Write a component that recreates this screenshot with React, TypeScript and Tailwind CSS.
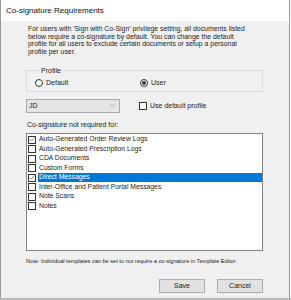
import { ChevronDown } from "lucide-react";

const items = [
  { label: "Auto-Generated Order Review Logs", checked: true },
  { label: "Auto-Generated Prescription Logs", checked: false },
  { label: "CDA Documents", checked: false },
  { label: "Custom Forms", checked: false },
  { label: "Direct Messages", checked: true, selected: true },
  { label: "Inter-Office and Patient Portal Messages", checked: false },
  { label: "Note Scans", checked: false },
  { label: "Notes", checked: false },
];

const Check = ({ checked }: { checked: boolean }) => (
  <div className="w-[8px] h-[8px] border border-[#333] bg-white flex items-center justify-center shrink-0">
    {checked && (
      <svg width="7" height="7" viewBox="0 0 7 7">
        <path d="M0.8 3.4 L2.7 5.4 L6.3 1.2" fill="none" stroke="#555" strokeWidth="0.8" />
      </svg>
    )}
  </div>
);

const Radio = ({ on }: { on: boolean }) => (
  <div className="w-[8px] h-[8px] rounded-full border border-[#333] bg-white flex items-center justify-center">
    {on && <div className="w-[4px] h-[4px] rounded-full bg-[#333]" />}
  </div>
);

export default function App() {
  return (
    <div
      className="w-[291px] h-[300px] bg-white flex flex-col text-[#000]"
      style={{ fontFamily: '"Liberation Sans", Arial, sans-serif' }}
    >
      <div className="w-[290px] h-[298px] border-l border-r border-[#9a9a9a] flex flex-col">
        <div className="h-[21px] bg-white flex items-center pl-[5px] text-[8px] text-[#111]">
          Co-signature Requirements
        </div>
        <div className="flex-1 bg-[#f0f0f0] pl-[25px] pr-[26px] flex flex-col">
          <p className="mt-[4px] pl-[2px] text-[6.9px] leading-[7.7px] text-[#222]">
            <span className="block">For users with 'Sign with Co-Sign' privilege setting, all documents listed</span>
            <span className="block">below require a co-signature by default. You can change the default</span>
            <span className="block">profile for all users to exclude certain documents or setup a personal</span>
            <span className="block">profile per user.</span>
          </p>

          <fieldset className="mt-[11px] h-[25px] border border-[#dcdcdc] px-[8px]">
            <legend className="ml-[5px] px-[1px] text-[7px] leading-[7px] text-[#222]">Profile</legend>
            <div className="flex items-center mt-[4px] text-[7px] text-[#222]">
              <div className="flex items-center gap-[3px] w-[105px]">
                <Radio on={false} />
                <span>Default</span>
              </div>
              <div className="flex items-center gap-[3px]">
                <Radio on={true} />
                <span>User</span>
              </div>
            </div>
          </fieldset>

          <div className="mt-[7px] flex items-center">
            <div className="w-[94px] h-[14px] bg-[#e5e5e5] border border-[#acacac] flex items-center justify-between pl-[2px] pr-[3px] text-[7px] text-[#222]">
              <span>JD</span>
              <ChevronDown size={7} strokeWidth={1.5} color="#555" />
            </div>
            <div className="ml-[19px] flex items-center gap-[3px] text-[7px] text-[#222]">
              <Check checked={false} />
              <span>Use default profile</span>
            </div>
          </div>

          <div className="mt-[8px] pl-[1px] text-[7px] leading-[8px] text-[#222]">Co-signature not required for:</div>

          <div className="mt-[4px] h-[118px] bg-white border border-[#828282] pt-[1px] pl-[1px]">
            {items.map((it) => (
              <div key={it.label} className="h-[9.5px] flex items-center">
                <Check checked={it.checked} />
                <div
                  className={
                    it.selected
                      ? "flex-1 h-full ml-[2px] bg-[#0078d7] text-white flex items-center pl-[1px] text-[6.8px]"
                      : "flex-1 h-full ml-[2px] text-[#222] flex items-center pl-[1px] text-[6.8px]"
                  }
                >
                  {it.label}
                </div>
              </div>
            ))}
          </div>

          <div className="mt-[7px] text-[5.6px] leading-[6px] text-[#222]">
            Note: Individual templates can be set to not require a co-signature in Template Editor.
          </div>

          <div className="mt-[15px] flex justify-end gap-[12px]">
            <button className="w-[46px] h-[14px] bg-[#e1e1e1] border border-[#adadad] text-[7px] text-[#222]">Save</button>
            <button className="w-[46px] h-[14px] bg-[#e1e1e1] border border-[#adadad] text-[7px] text-[#222]">Cancel</button>
          </div>
        </div>
      </div>
      <div className="h-[2px] bg-[#bbb]" />
    </div>
  );
}
